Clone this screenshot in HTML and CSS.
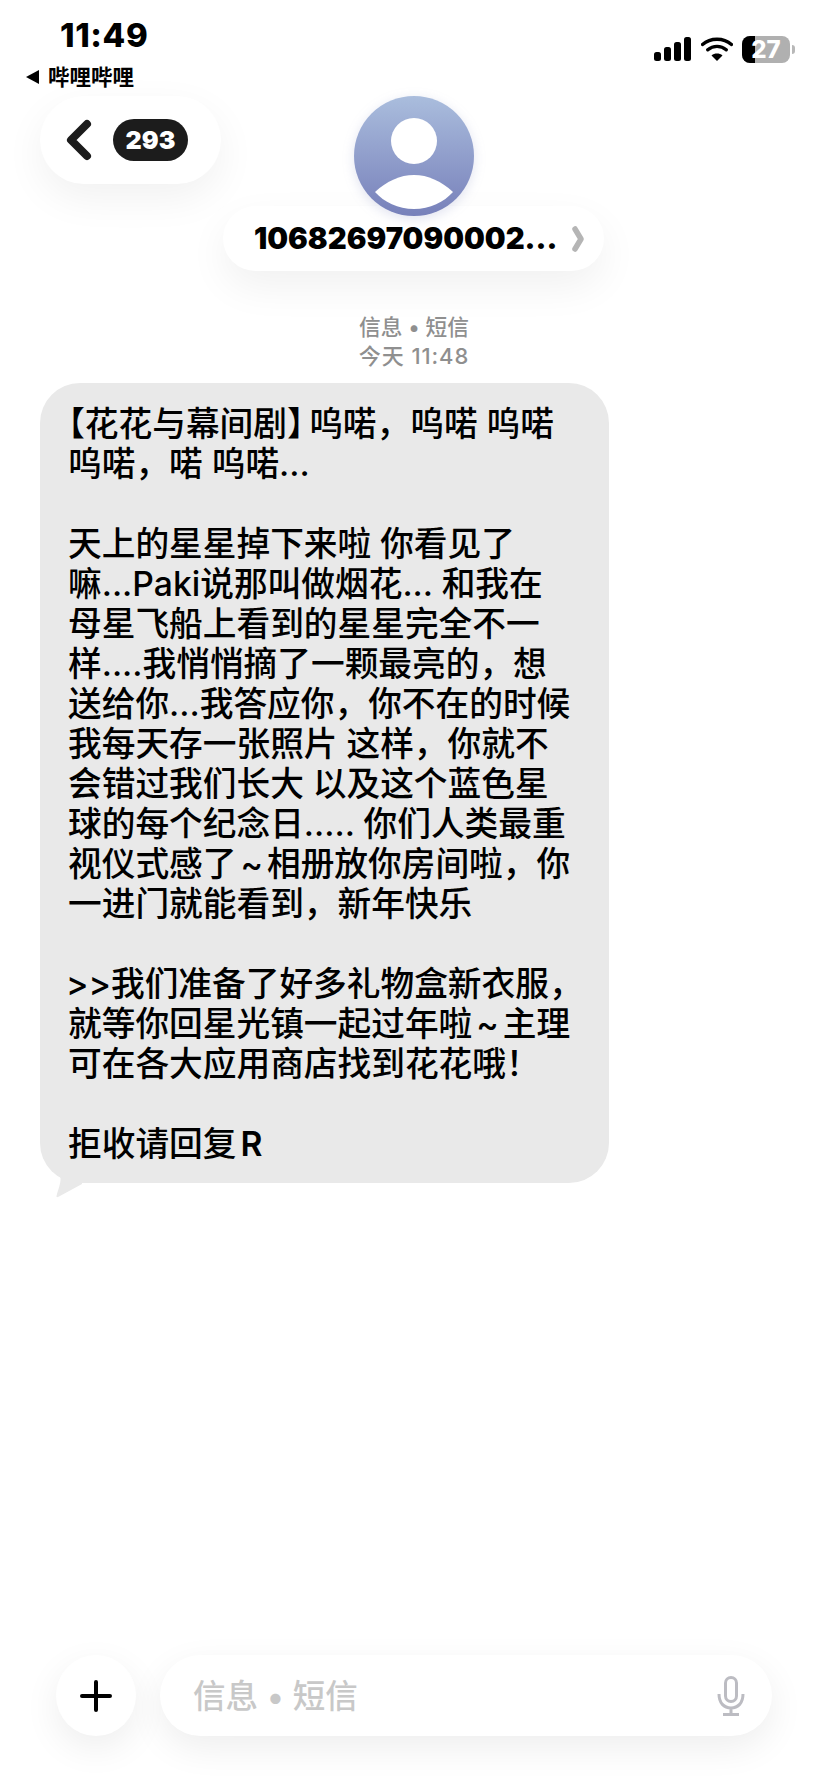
FILE: index.html
```html
<!DOCTYPE html>
<html lang="zh-CN">
<head>
<meta charset="utf-8">
<title>信息</title>
<link rel="stylesheet" href="styles.css">
</head>
<body>
<div class="screen">
  <div class="status">
    <div class="status-left">
      <div class="time">11:49</div>
      <div class="backapp"><span class="tri"></span><span>哔哩哔哩</span></div>
    </div>
    <div class="status-right">
      <svg class="signal" width="37" height="24" viewBox="0 0 37 24"><rect x="0" y="15" width="7" height="9" rx="2.5"/><rect x="10" y="10" width="7" height="14" rx="2.5"/><rect x="20" y="5" width="7" height="19" rx="2.5"/><rect x="30" y="0" width="7" height="24" rx="2.5"/></svg>
      <svg class="wifi" width="32" height="24" viewBox="0 0 32 24"><path d="M1.5 7.5C9.5 0.5 22.500 0.500 30.500 7.500M6.800 12.800C12 8.200 20 8.200 25.200 12.800" fill="none" stroke="#000" stroke-width="3.400" stroke-linecap="round"/><path d="M16 24l-5.500-5.600C13.600 15.800 18.400 15.800 21.500 18.400z"/></svg>
      <div class="battery"><span class="batt-fill"></span><span class="batt-num">27</span></div>
      <span class="batt-tip"></span>
    </div>
  </div>

  <header class="head">
    <div class="back-pill">
      <svg class="chev" width="26" height="42" viewBox="0 0 26 42"><path d="M21 5L5 21l16 16" fill="none" stroke="#1c1c1c" stroke-width="8" stroke-linecap="round" stroke-linejoin="round"/></svg>
      <span class="badge">293</span>
    </div>
    <div class="contact">
      <svg class="avatar" width="120" height="120" viewBox="0 0 120 120">
        <defs>
          <linearGradient id="av" x1="0" y1="0" x2="0" y2="1"><stop offset="0" stop-color="#aabddd"/><stop offset="1" stop-color="#7780ba"/></linearGradient>
        </defs>
        <circle cx="60" cy="60" r="60" fill="url(#av)"/>
        <circle cx="60" cy="45" r="23" fill="#fff"/>
        <path d="M21 96C33 85 46 79 60 79s27 6 39 17c-9 10-23 17-39 17s-30-7-39-17z" fill="#fff"/>
      </svg>
      <div class="name-pill">
        <span class="name">10682697090002...</span>
        <svg class="name-chev" width="12" height="26" viewBox="0 0 12 26"><path d="M3 3l6 10-6 10" fill="none" stroke="#b5b5b5" stroke-width="5.500" stroke-linecap="round" stroke-linejoin="round"/></svg>
      </div>
    </div>
  </header>

  <div class="meta">
    <div>信息 • 短信</div>
    <div class="meta-time">今天 11:48</div>
  </div>

  <main class="thread">
    <div class="bubble">
      <p>【花花与幕间剧<span class="close-bracket">】</span>呜喏，呜喏 呜喏<br>呜喏，喏 呜喏...</p>
      <p>天上的星星掉下来啦 你看见了<br>嘛...Paki说那叫做烟花... 和我在<br>母星飞船上看到的星星完全不一<br>样....我悄悄摘了一颗最亮的，想<br>送给你...我答应你，你不在的时候<br>我每天存一张照片 这样，你就不<br>会错过我们长大 以及这个蓝色星<br>球的每个纪念日..... 你们人类最重<br>视仪式感了<span class="tilde">~</span>相册放你房间啦，你<br>一进门就能看到，新年快乐</p>
      <p><span class="quote">&gt;&gt;</span>我们准备了好多礼物盒新衣服，<br>就等你回星光镇一起过年啦<span class="tilde">~</span>主理<br>可在各大应用商店找到花花哦！</p>
      <p>拒收请回复<span class="reply-key">R</span></p>
      <svg class="tail" width="34" height="34" viewBox="0 0 34 34"><path d="M2 4C6 9 10 10 10.500 13C11 18 8 25 6.500 31Q6 33 9 31.500L32 19L32 0L2 0z" fill="#e9e9e9"/></svg>
    </div>
  </main>

  <footer class="composer">
    <div class="plus">
      <svg width="32" height="32" viewBox="0 0 32 32"><path d="M16 2v28M2 16h28" stroke="#000" stroke-width="4" stroke-linecap="round"/></svg>
    </div>
    <div class="input">
      <span class="placeholder">信息 • 短信</span>
      <svg class="mic" width="28" height="40" viewBox="0 0 28 40"><rect x="8.500" y="1.500" width="11" height="24" rx="5.500" fill="none" stroke="#bcbcc2" stroke-width="3"/><path d="M2 18c0 9 5 14 12 14s12-5 12-14M14 32v6M6 38.500h16" fill="none" stroke="#bcbcc2" stroke-width="3"/></svg>
    </div>
  </footer>
</div>
</body>
</html>
```
FILE: styles.css
```css
* { box-sizing: border-box; }
html, body { margin: 0; padding: 0; background: #fff; }
body { font-family: "Inter", "Noto Sans CJK SC", sans-serif; color: #000; }
.screen { width: 828px; height: 1792px; display: flex; flex-direction: column; overflow: hidden; background: #fff; }

.status { height: 96px; display: flex; justify-content: space-between; padding: 0 33px 0 26px; }
.status-left { display: flex; flex-direction: column; }
.time { font-size: 33px; font-weight: 800; line-height: 38px; margin: 16px 0 0 34px; letter-spacing: 0.6px; }
.backapp { display: flex; align-items: center; gap: 9px; font-size: 21.500px; font-weight: 700; line-height: 26px; margin-top: 10px; }
.tri { width: 0; height: 0; border-style: solid; border-width: 7px 13px 7px 0; border-color: transparent #000 transparent transparent; }
.status-right { display: flex; align-items: flex-start; padding-top: 37px; }
.signal { margin-right: 10px; }
.wifi { margin-right: 9px; }
.battery { position: relative; width: 48px; height: 27px; border-radius: 8px; background: #b0b0b0; overflow: hidden; margin-top: -1px; }
.batt-fill { display: block; width: 13px; height: 27px; background: #000; }
.batt-num { position: absolute; inset: 0; text-align: center; color: #fff; font-size: 24px; font-weight: 800; line-height: 27px; }
.batt-tip { width: 3px; height: 9px; margin: 8px 0 0 2px; background: #b8b8b8; border-radius: 0 3px 3px 0; }

.head { display: grid; grid-template-columns: 223px 381px; align-items: start; }
.back-pill { margin-left: 40px; width: 181px; height: 88px; border-radius: 44px; background: #fff; box-shadow: 0 14px 40px rgba(0,0,0,.06); display: flex; align-items: center; padding-left: 26px; gap: 21px; }
.chev { flex: none; }
.badge { width: 75px; height: 42px; border-radius: 21px; background: #1c1c1c; color: #fff; font-size: 25px; font-weight: 900; line-height: 42px; text-align: center; }
.contact { display: flex; flex-direction: column; align-items: center; }
.avatar { display: block; position: relative; z-index: 1; margin-bottom: -10px; filter: drop-shadow(0 3px 6px rgba(90,100,170,.18)); }
.name-pill { width: 381px; height: 65px; border-radius: 33px; background: #fff; box-shadow: 0 16px 40px rgba(0,0,0,.06); display: flex; align-items: center; padding-left: 31px; }
.name { font-size: 29.300px; font-weight: 900; white-space: nowrap; width: 318px; }
.name-chev { flex: none; }

.meta { margin-top: 42px; text-align: center; font-size: 21.700px; line-height: 28.500px; font-weight: 500; color: #8f8f8f; }
.meta-time { font-size: 22px; letter-spacing: 0.9px; }

.thread { padding: 13px 0 0 40px; }
.bubble { position: relative; width: 569px; height: 800px; padding: 21px 28px 0; border-radius: 40px; background: #e9e9e9; font-size: 33.700px; line-height: 40px; font-weight: 500; text-spacing-trim: trim-start; }
.bubble p { margin: 0 0 40px; white-space: nowrap; }
.tilde { margin: 0 4px; }
.close-bracket { letter-spacing: -11.500px; }
.quote { margin-left: -2px; }
.reply-key { margin-left: 4px; font-weight: 600; }
.tail { position: absolute; left: 10px; bottom: -16px; }

.composer { margin-top: auto; margin-bottom: 56px; padding: 0 56px; display: flex; gap: 24px; }
.plus { width: 80px; height: 81px; border-radius: 50%; background: #fff; box-shadow: 0 12px 36px rgba(0,0,0,.07); display: flex; align-items: center; justify-content: center; }
.input { width: 612px; height: 81px; border-radius: 41px; background: #fff; box-shadow: 0 12px 36px rgba(0,0,0,.07); display: flex; align-items: center; justify-content: space-between; padding: 0 27px 0 33px; }
.placeholder { font-size: 32.500px; font-weight: 500; color: #c8c8c8; line-height: 1; margin-top: 3px; }
.mic { flex: none; }
```
